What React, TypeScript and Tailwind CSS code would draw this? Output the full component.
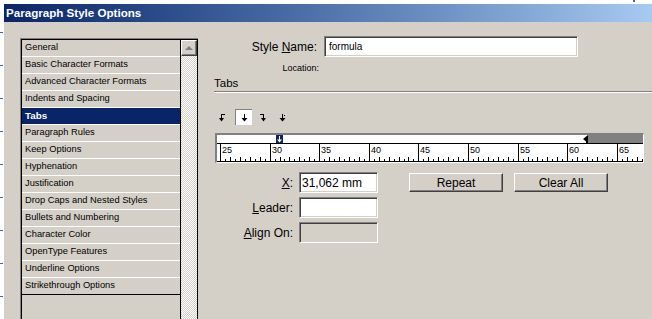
import React from "react";

const items = [
  "General",
  "Basic Character Formats",
  "Advanced Character Formats",
  "Indents and Spacing",
  "Tabs",
  "Paragraph Rules",
  "Keep Options",
  "Hyphenation",
  "Justification",
  "Drop Caps and Nested Styles",
  "Bullets and Numbering",
  "Character Color",
  "OpenType Features",
  "Underline Options",
  "Strikethrough Options",
];

const sunken =
  "border border-t-[#808080] border-l-[#808080] border-r-white border-b-white shadow-[inset_1px_1px_0_#404040,inset_-1px_-1px_0_#d4d0c8]";
const raised =
  "border border-t-white border-l-white border-r-[#404040] border-b-[#404040] shadow-[inset_-1px_-1px_0_#808080] bg-[#d4d0c8]";

function Ruler() {
  const ticks: React.ReactNode[] = [];
  for (let m = 0; m <= 90; m++) {
    const x = Math.round(3 + 4.96 * m);
    if (x > 425) break;
    if (m % 10 === 0) {
      ticks.push(<rect key={m} x={x} y={9} width={1} height={18} />);
      ticks.push(
        <text key={"n" + m} x={x + 2} y={18} fontSize={9}>
          {25 + m / 2}
        </text>
      );
    } else if (m % 2 === 0) {
      ticks.push(<rect key={m} x={x} y={22} width={1} height={4} />);
    } else {
      ticks.push(<rect key={m} x={x} y={24} width={1} height={2} />);
    }
  }
  return (
    <svg width={426} height={27} viewBox="0 0 426 27" shapeRendering="crispEdges" className="block">
      <rect x={0} y={0} width={426} height={27} fill="#ffffff" />
      <rect x={371} y={0} width={55} height={8} fill="#808080" />
      <rect x={0} y={8} width={426} height={1} fill="#000" />
      <rect x={0} y={26} width={426} height={1} fill="#000" />
      <g fill="#000">{ticks}</g>
      <rect x={59} y={0} width={7} height={8} fill="#0a246a" />
      <rect x={62} y={1} width={1} height={4} fill="#fff" />
      <polygon points="60,4.5 65,4.5 62.5,7.5" fill="#fff" shapeRendering="auto" />
      <polygon points="366,4 371,0 371,8" fill="#000" shapeRendering="auto" />
      <rect x={369} y={4} width={2} height={5} fill="#000" />
    </svg>
  );
}

function TabIcon({ kind }: { kind: "left" | "center" | "right" | "decimal" }) {
  return (
    <svg width={7} height={9} viewBox="0 0 7 9" shapeRendering="crispEdges">
      {kind === "left" && (
        <g fill="#000">
          <rect x={2} y={1} width={4} height={1} />
          <rect x={2} y={1} width={1} height={5} />
          <polygon points="0,5 5,5 2.5,8.5" shapeRendering="auto" />
        </g>
      )}
      {kind === "center" && (
        <g fill="#000">
          <rect x={3} y={1} width={1} height={5} />
          <polygon points="0.5,5 6.5,5 3.5,8.5" shapeRendering="auto" />
        </g>
      )}
      {kind === "right" && (
        <g fill="#000">
          <rect x={1} y={1} width={4} height={1} />
          <rect x={4} y={1} width={1} height={5} />
          <polygon points="2,5 7,5 4.5,8.5" shapeRendering="auto" />
        </g>
      )}
      {kind === "decimal" && (
        <g fill="#000">
          <rect x={3} y={1} width={1} height={5} />
          <rect x={5} y={2} width={1} height={1} />
          <polygon points="0.5,5 6.5,5 3.5,8.5" shapeRendering="auto" />
        </g>
      )}
    </svg>
  );
}

export default function App() {
  return (
    <div
      className="w-[652px] h-[319px] overflow-hidden bg-white flex text-black"
      style={{ fontFamily: '"Liberation Sans", Arial, sans-serif' }}
    >
      {/* left strip with ticks */}
      <div className="w-[4px] shrink-0 flex flex-col pt-[32px]">
        {Array.from({ length: 9 }).map((_, i) => (
          <div key={i} className="w-[3px] h-[1px] bg-[#3a6ea5] mb-[32px] shrink-0" />
        ))}
      </div>

      <div className="flex-1 flex flex-col">
        {/* top strip */}
        <div className="h-[4px] shrink-0 flex">
          <div className="ml-[629px] w-[2px] h-[2px] bg-[#3a6ea5]" />
        </div>

        {/* title bar */}
        <div className="h-[18px] shrink-0 bg-linear-to-r from-[#0a246a] to-[#a6caf0] flex items-center pl-[2px]">
          <span className="text-white font-bold text-[11.6px] leading-none">Paragraph Style Options</span>
        </div>

        {/* body */}
        <div className="flex-1 bg-[#d4d0c8] flex items-start pl-[16px]">
          {/* list box */}
          <div className="mt-[16px] w-[178px] h-[300px] shrink-0 border-t border-l border-[#808080] flex">
            <div className="flex-1 flex border-t border-l border-r border-black">
              <div className="w-[158px] flex flex-col">
                {items.map((it, i) => (
                  <div
                    key={it}
                    className={
                      "h-[17px] shrink-0 flex items-center pl-[3px] border-b whitespace-nowrap " +
                      (i === items.length - 1 ? "border-black " : "border-white ") +
                      (it === "Tabs"
                        ? "bg-[#0a246a] text-white font-bold text-[9.8px]"
                        : "text-[9.3px]")
                    }
                  >
                    {it}
                  </div>
                ))}
              </div>
              <div className="w-[1px] bg-black" />
              <div className="w-[16px] flex flex-col">
                <div className={"h-[16px] shrink-0 flex items-center justify-center " + raised}>
                  <svg width={8} height={5} viewBox="0 0 8 5">
                    <polygon points="0,4 8,4 4,0" fill="#808080" />
                  </svg>
                </div>
                <div className="flex-1 bg-[repeating-conic-gradient(#ffffff_0%_25%,#d4d0c8_0%_50%)] [background-size:2px_2px]" />
              </div>
            </div>
          </div>

          {/* right panel */}
          <div className="flex-1 flex flex-col pt-[14px]">
            <div className="flex items-center h-[21px]">
              <div className="w-[119px] text-right text-[12px] leading-none">
                Style <span className="underline">N</span>ame:
              </div>
              <div className={"ml-[7px] w-[254px] h-[21px] bg-white flex items-center pl-[4px] text-[10px] " + sunken}>
                formula
              </div>
            </div>

            <div className="mt-[5px] h-[12px] flex items-center">
              <div className="w-[121px] text-right text-[9px] leading-none">Location:</div>
            </div>

            <div className="mt-[2px] ml-[16px] h-[14px] leading-[14px] text-[11.5px]">Tabs</div>
            <div className="mt-[1px] ml-[16px] h-[2px] border-t border-t-[#808080] border-b border-b-white" />

            <div className="mt-[16px] h-[16px] flex items-center">
              <div className="ml-[16px] w-[17px] h-[16px] flex items-center justify-center">
                <TabIcon kind="left" />
              </div>
              <div className="ml-[4px] w-[17px] h-[16px] flex items-center justify-center bg-white border-t border-l border-[#808080]">
                <TabIcon kind="center" />
              </div>
              <div className="ml-[2px] w-[17px] h-[16px] flex items-center justify-center">
                <TabIcon kind="right" />
              </div>
              <div className="ml-[3px] w-[17px] h-[16px] flex items-center justify-center">
                <TabIcon kind="decimal" />
              </div>
            </div>

            <div className="mt-[8px] ml-[17px] w-[429px] h-[30px] border-t-2 border-l-2 border-t-[#808080] border-l-[#808080] border-r border-b border-r-white border-b-white shadow-[inset_1px_1px_0_#404040]">
              <Ruler />
            </div>

            <div className="mt-[9px] flex items-start">
              <div className="h-[21px] flex items-center">
                <div className="w-[95px] text-right text-[12px] leading-none">
                  <span className="underline">X</span>:
                </div>
                <div className={"ml-[6px] w-[79px] h-[21px] bg-white flex items-center pl-[2px] text-[12px] " + sunken}>
                  31,062 mm
                </div>
              </div>
              <div className={"ml-[31px] mt-[1px] w-[94px] h-[19px] flex items-center justify-center text-[12px] " + raised}>
                Repeat
              </div>
              <div className={"ml-[11px] mt-[1px] w-[94px] h-[19px] flex items-center justify-center text-[12px] " + raised}>
                Clear All
              </div>
            </div>

            <div className="mt-[4px] h-[21px] flex items-center">
              <div className="w-[95px] text-right text-[12px] leading-none">
                <span className="underline">L</span>eader:
              </div>
              <div className={"ml-[6px] w-[79px] h-[21px] bg-white " + sunken} />
            </div>

            <div className="mt-[4px] h-[21px] flex items-center">
              <div className="w-[95px] text-right text-[12px] leading-none">
                <span className="underline">A</span>lign On:
              </div>
              <div className={"ml-[6px] w-[79px] h-[21px] bg-[#d4d0c8] " + sunken} />
            </div>
          </div>
        </div>
      </div>
    </div>
  );
}
